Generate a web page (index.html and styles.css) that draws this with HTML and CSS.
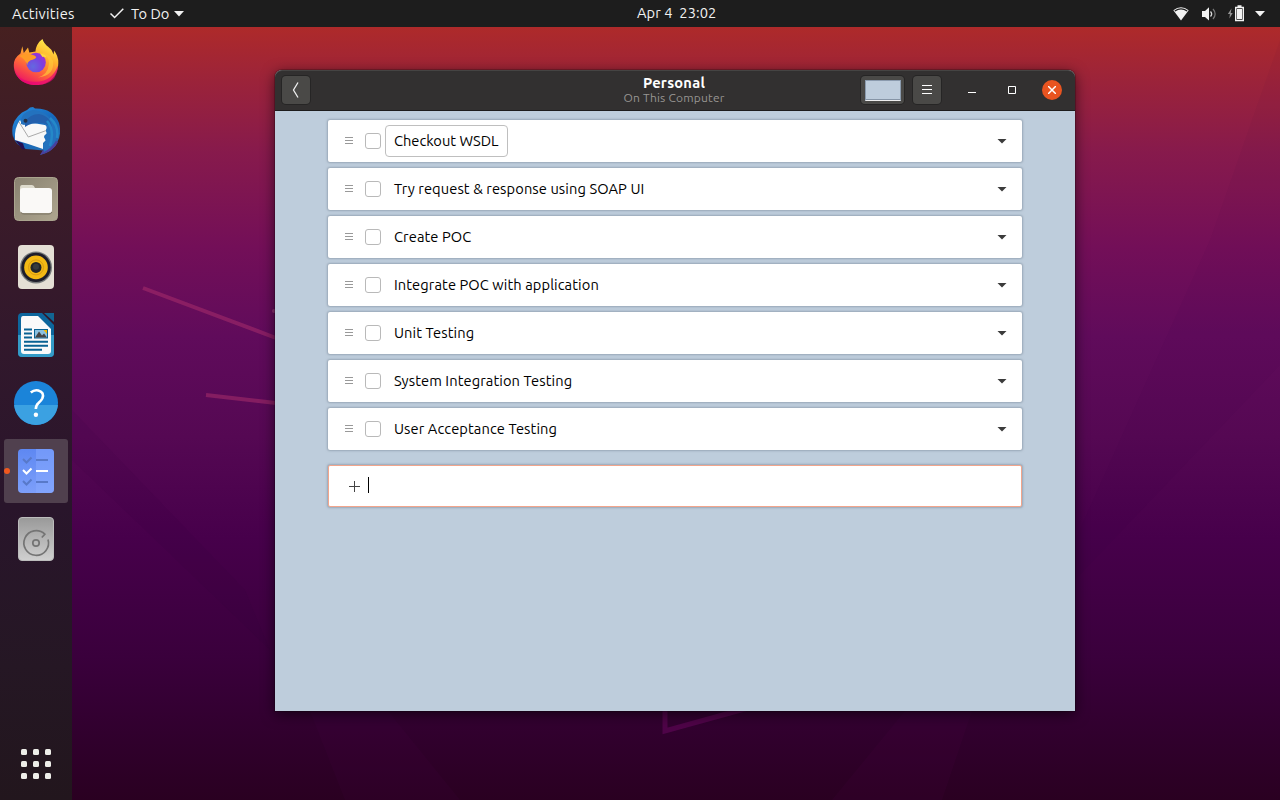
FILE: index.html
```html
<!DOCTYPE html>
<html lang="en">
<head>
<meta charset="utf-8">
<title>To Do</title>
<link rel="stylesheet" href="styles.css">
</head>
<body>
<div class="screen">
<header class="topbar">
  <div class="topbar-left">
    <span class="activities">Activities</span>
    <svg class="app-check" width="16" height="14" viewBox="0 0 16 14"><path d="M1.500 6.500 5.600 10.500 14.300 1.800" fill="none" stroke="#f2f2f2" stroke-width="1.500"/></svg>
    <span class="app-name">To Do</span>
    <svg class="app-arrow" width="10" height="6"><path d="M0 0h10L5 5.500z" fill="#f2f2f2"/></svg>
  </div>
  <span class="clock">Apr 4&nbsp; 23:02</span>
  <div class="topbar-right">
    <svg class="wifi" width="16" height="16" viewBox="0 0 16 16"><path d="M.3 4.200Q8-1.500 15.700 4.200L8 14.500z" fill="#f2f2f2"/><path d="M1.800 5Q8 .7 14.200 5" fill="none" stroke="#1d1d1d" stroke-width="1.200"/></svg>
    <svg class="volume" width="16" height="16" viewBox="0 0 16 16"><path d="M1 5h3l4-3.800v13.400L4 11H1z" fill="#f2f2f2"/><path d="M9.500 5.500q2.300 2.500 0 5" fill="none" stroke="#ddd" stroke-width="1.300"/><path d="M12 3q4.300 5 0 10" fill="none" stroke="#777" stroke-width="1.200"/></svg>
    <svg class="battery" width="18" height="18" viewBox="0 0 18 18"><path d="M4.500 4.500.8 10h2.100l-.5 4.600L5.700 9H3.700z" fill="#929292"/><path d="M8.700 3.500h7.600v13H8.700zM10.500 2h4" fill="none" stroke="#f2f2f2" stroke-width="1.400"/><path d="M10 5h5v10h-5z" fill="#f2f2f2"/></svg>
    <svg width="10" height="6"><path d="M0 0h10L5 5.500z" fill="#f2f2f2"/></svg>
  </div>
</header>
<div class="desktop">
  <svg class="wallpaper" width="1208" height="773" viewBox="72 27 1208 773">
    <path d="M72 410 245 590 270 650 72 460z" fill="#20003b" opacity=".06"/>
    <path d="M1075 540 1210 240 1280 40V365L1075 580z" fill="#20003b" opacity=".03"/>
    <path d="M310 711H388L460 800H345z" fill="#51004c" opacity=".1"/>
    <path d="M905 711H972L942 800H832z" fill="#51004c" opacity=".12"/>
    <path d="M143 288 276 338M206 395l70 8" fill="none" stroke="#a82e6c" stroke-width="4" opacity=".55"/>
    <path d="M665 705v26l83-23" fill="none" stroke="#56054f" stroke-width="5" opacity=".8"/>
    <circle cx="274" cy="311" r="2" fill="#a84b83" opacity=".6"/>
  </svg>
  <nav class="dock">
    <div class="launcher"><svg width="48" height="48" viewBox="0 0 48 48">
      <defs><linearGradient id="fx" x1=".8" y1="0" x2=".3" y2="1"><stop stop-color="#fff44f"/><stop offset=".35" stop-color="#ffb52d"/><stop offset=".65" stop-color="#ff6838"/><stop offset="1" stop-color="#ec1266"/></linearGradient><radialGradient id="fp" cx=".35" cy=".7" r=".8"><stop stop-color="#6369e0"/><stop offset=".6" stop-color="#7c3fe0"/><stop offset="1" stop-color="#a52ed1"/></radialGradient></defs>
      <path d="M10.300 7.300 8.500 14.500Q1.800 19 1.800 26C1.800 38 11 46 24.200 46 37 46 46 37.500 46.300 24q.2-7-4.300-12.500l-.3 4L39.500 11C37.500 8.500 32 5.500 30.500 0 25.500 3.500 23.800 8.500 23.500 12.500L17.300 13.400 16 8.500 11.800 14z" fill="url(#fx)"/>
      <path d="M2 28Q5 42.500 22 42.700q17 1 24-16Q45 46 24.500 46 5 46 2 28" fill="#e6007a" opacity=".65"/>
      <path d="M28 13.500q9 3 9 11-1 11-11 14 17-2 15-16.500-3-8-13-8.500" fill="#ffca3b" opacity=".65"/>
      <circle cx="24" cy="23.500" r="9.800" fill="url(#fp)"/>
      <path d="M7.500 17q6-3.500 12-1.500 3.500.5 4.800 2.500-1 2.500-5.800 3.300-3.500 2.200-3.200 5-1.500-5.500-7.800-9.300" fill="#ff9b26"/>
      <path d="M28 14.500q6 .5 6.500 4-2-1-4-.5z" fill="#ffd83d"/>
    </svg></div>
    <div class="launcher"><svg width="48" height="48" viewBox="0 0 48 48">
      <defs><linearGradient id="tb" x1=".1" y1="0" x2=".9" y2="1"><stop stop-color="#268adb"/><stop offset=".5" stop-color="#1768bb"/><stop offset=".8" stop-color="#226fb5"/><stop offset="1" stop-color="#5a2d9d"/></linearGradient></defs>
      <path d="M1 30Q-2.500 15 10 5.500L15 3l3-2.500 3-.5 2 1.500Q41 1 47 16q3 11-2 20-4.500 9-17 12l4-4.500L14 42Q3 38 1 29" fill="url(#tb)"/>
      <path d="M3 33l7 9 3 .5-2-6z" fill="#241052"/>
      <path d="M31 43q9-2 13-9l2 1q-4 9-18 13z" fill="#49409d"/>
      <path d="M3 33Q2 21 8 13l2 4q10-2 23 1l3 1-2 4 1 3-3 3 2 4-3 3v6q-14-5-28-9" fill="#f8f8f8"/>
      <path d="m7 15 9.300 15 18-6.500" fill="none" stroke="#aaa" stroke-width="1"/>
      <path d="M12 18q10-4 20-1 4 2 2 7l1 3-3 3 2 4-3 4 1 7q15-8 12-22Q38 4 21 3 8 5 9 17z" fill="#2372be"/>
      <path d="M13 15q5-8 14-8 12 2 13 14-3-4-10-5-9-1-17 4z" fill="#2360ad"/>
      <path d="M35 14q8 9 3 25M38 11q9 8 7 20" fill="none" stroke="#2588c8" stroke-width="2.500"/>
      <circle cx="13.500" cy="13.800" r="2" fill="#253146"/>
    </svg></div>
    <div class="launcher"><svg width="48" height="48" viewBox="0 0 48 48">
      <defs><linearGradient id="fi" x2="1" y2="1"><stop stop-color="#888170"/><stop offset="1" stop-color="#aea68f"/></linearGradient></defs>
      <rect x="2.500" y="2.500" width="43" height="43" rx="4" fill="url(#fi)" stroke="#aaa48e"/><path d="M8 13q0-3 2-3h10q2 0 3 3l2 2v9H8z" fill="#dedbcd"/><rect x="8" y="13" width="32" height="25" rx="3" fill="#faf9f7"/><path d="M9 37.500q1 1.500 3 1.500h25q2 0 3-2" fill="none" stroke="#7b7464"/>
    </svg></div>
    <div class="launcher"><svg width="48" height="48" viewBox="0 0 48 48">
      <rect x="6" y="2" width="36" height="44" rx="4" fill="#e4dfd5"/><circle cx="24" cy="24.400" r="16" fill="#777b7c"/><circle cx="24" cy="24.400" r="14.700" fill="#1d1d2a"/><circle cx="24" cy="24.400" r="11.800" fill="#f3b914"/><circle cx="24" cy="24.400" r="7.500" fill="none" stroke="#d99a12"/><circle cx="24" cy="24.400" r="5.500" fill="#22252a"/><circle cx="24" cy="23.700" r="3" fill="#363b3e"/>
    </svg></div>
    <div class="launcher"><svg width="48" height="48" viewBox="0 0 48 48">
      <path d="M10 2h20l12 12v28q0 4-4 4H10q-4 0-4-4V6q0-4 4-4" fill="#0d669d"/><path d="M6 24h36v18q0 4-4 4H10q-4 0-4-4z" fill="#349bc7"/><path d="M11 5h15l13 13v22q0 3-3 3H12q-3 0-3-3V8q0-3 2-3" fill="#fafafa"/><path d="M32 2h10v9z" fill="#126592"/>
      <path d="M12 18.500h8M12 22.500h8M12 26.500h8M12 30.700h24M12 34.700h24M12 38.700h18" stroke="#096293" stroke-width="2"/><rect x="22.500" y="18.500" width="13" height="8.500" fill="#8bc1e0" stroke="#096293"/><path d="m23 26.500 4-6 3 4 2-2 3 4z" fill="#444"/><path d="M31.500 19h3.500v4z" fill="#f4b800"/>
    </svg></div>
    <div class="launcher help"><svg width="48" height="48" viewBox="0 0 48 48"><circle cx="24" cy="24" r="22" fill="#1b84d9"/><path d="M2.100 26h43.800a22 22 0 0 1-43.800 0" fill="#3ba1e2"/><path d="M18.800 13.500q3.500-3 7.500-2 6.500 1.700 4 8-1 2-3.800 4.500-2.500 2-2.700 6" fill="none" stroke="#fff" stroke-width="2.600"/><circle cx="23.900" cy="35.700" r="2.200" fill="#fff"/></svg></div>
    <div class="launcher active"><i class="running"></i><svg width="48" height="48" viewBox="0 0 48 48">
      <defs><linearGradient id="td" x2="0" y2="1"><stop stop-color="#5e88f2"/><stop offset="1" stop-color="#7d9ffa"/></linearGradient></defs>
      <rect x="6" y="2" width="36" height="44" rx="4" fill="url(#td)"/><path d="M24 2h14q4 0 4 4v36q0 4-4 4H24z" fill="#87a9ff" opacity=".5"/><g fill="none" stroke-width="2"><path d="m11 12 3.500 3.500 5-5M24 13h12M11 34l3.500 3.500 5-5M24 35h12" stroke="#5879c9"/><path d="m11 23 3.500 3.500 5-5M24 24h12" stroke="#fff"/></g>
    </svg></div>
    <div class="launcher"><svg width="48" height="48" viewBox="0 0 48 48"><defs><linearGradient id="di" x2="0" y2="1"><stop stop-color="#999"/><stop offset="1" stop-color="#d0d0d0"/></linearGradient></defs><rect x="6.500" y="2.500" width="35" height="43" rx="3.500" fill="url(#di)" stroke="#bcbcbc"/><circle cx="24" cy="28" r="3.200" fill="none" stroke="#747474" stroke-width="1.700"/><path d="M36 24.500A12.300 12.300 0 1 1 32.800 19.200L29.800 22.500" fill="none" stroke="#747474" stroke-width="1.700"/></svg></div>
    <div class="app-grid"><i></i><i></i><i></i><i></i><i></i><i></i><i></i><i></i><i></i></div>
  </nav>
  <main class="window">
    <header class="headerbar">
      <button class="button back"><svg width="28" height="28"><path d="m16 6.500-4.500 7.500 4.500 7.500" fill="none" stroke="#f0f0f0" stroke-width="1.300"/></svg></button>
      <div class="heading"><span class="title">Personal</span><span class="subtitle">On This Computer</span></div>
      <div class="controls">
        <button class="button color"><i></i></button>
        <button class="button menu"><svg width="10" height="10"><path d="M0 .5h10M0 4.500h10M0 8.500h10" stroke="#fff"/></svg></button>
        <button class="control minimize"><svg width="8" height="1"><path d="M0 .5h8" stroke="#fff"/></svg></button>
        <button class="control maximize"><svg width="8" height="8"><path d="M.5.5h7v7h-7z" fill="none" stroke="#fff"/></svg></button>
        <button class="control close"><svg width="8" height="8"><path d="m0 0 8 8M8 0 0 8" stroke="#fff" stroke-width="1.500"/></svg></button>
      </div>
    </header>
    <section class="tasks">
      <div class="task"><span class="grip"></span><i class="checkbox"></i><span class="task-name focused">Checkout WSDL</span><i class="expand"></i></div>
      <div class="task"><span class="grip"></span><i class="checkbox"></i><span class="task-name">Try request &amp; response using SOAP UI</span><i class="expand"></i></div>
      <div class="task"><span class="grip"></span><i class="checkbox"></i><span class="task-name">Create POC</span><i class="expand"></i></div>
      <div class="task"><span class="grip"></span><i class="checkbox"></i><span class="task-name">Integrate POC with application</span><i class="expand"></i></div>
      <div class="task"><span class="grip"></span><i class="checkbox"></i><span class="task-name">Unit Testing</span><i class="expand"></i></div>
      <div class="task"><span class="grip"></span><i class="checkbox"></i><span class="task-name">System Integration Testing</span><i class="expand"></i></div>
      <div class="task"><span class="grip"></span><i class="checkbox"></i><span class="task-name">User Acceptance Testing</span><i class="expand"></i></div>
      <div class="new-task"><svg width="11" height="11"><path d="M0 5.500h11M5.500 0v11" stroke="#444"/></svg><i class="caret"></i></div>
    </section>
  </main>
</div>
</div>
</body>
</html>
```
FILE: styles.css
```css
* { box-sizing: border-box; }
body { margin: 0; overflow: hidden; font: 14.667px/20px Ubuntu, "Noto Sans", sans-serif; }
svg { display: block; flex-shrink: 0; }
button { border: 0; padding: 0; font: inherit; }
.screen { width: 1280px; height: 800px; display: flex; flex-direction: column; }
.topbar { height: 27px; background: #1d1d1d; color: #f2f2f2; display: grid; grid-template-columns: 637px auto 1fr; align-items: center; }
.topbar-left, .topbar-right { display: flex; align-items: center; }
.topbar-left { padding-left: 12px; }
.activities { width: 97px; letter-spacing: .25px; }
.app-name { margin-left: 6px; width: 37px; white-space: nowrap; }
.app-arrow { margin-left: 6px; }
.clock { white-space: nowrap; padding-bottom: 1px; letter-spacing: .05px; }
.topbar-right { justify-content: flex-end; padding-right: 15px; }
.wifi { margin-right: 12px; }
.volume { margin-right: 10px; }
.battery { margin: 0 10px 2px 0; }
.desktop { flex: 1; position: relative; display: flex; background: linear-gradient(#ae2a2a 0, #9b233a 55px, #871a4c 125px, #730f58 220px, #600b5b 310px, #550853 410px, #47004b 510px, #3a003c 630px, #31002e 705px, #2a0021 773px); }
.wallpaper { position: absolute; left: 72px; top: 0; }
.dock { width: 72px; padding: 4px 4px 21px; display: flex; flex-direction: column; gap: 4px; background: linear-gradient(#462020, #3d1c28 130px, #32182c 310px, #29152b 480px, #251724 640px, #22161d); }
.launcher { height: 64px; display: flex; align-items: center; justify-content: center; position: relative; border-radius: 3px; }
.active { background: #50404e; }
.running { position: absolute; left: 0; top: 29px; width: 6px; height: 6px; border-radius: 3px; background: #f0581f; }
.app-grid { margin: auto auto 0; display: grid; grid-template-columns: repeat(3, 6px); grid-auto-rows: 6px; gap: 6px; }
.app-grid i { background: #eeeee9; border-radius: 1.5px; }
.window { position: absolute; left: 275px; top: 43px; width: 800px; height: 641px; border-radius: 7px 7px 0 0; display: flex; flex-direction: column; background: #becddc; box-shadow: 0 0 0 1px #0003, 0 3px 14px #0009; }
.headerbar { height: 41px; background: #323030; border-top: 1px solid #454443; border-bottom: 1px solid #1d1c1c; border-radius: 7px 7px 0 0; display: grid; grid-template-columns: 1fr 102px 1fr; align-items: center; padding: 0 13px 1px 11px; }
.button { height: 28px; border-radius: 4px; background: #4a4947; box-shadow: 0 0 0 1px #262525; display: flex; align-items: center; justify-content: center; }
.back { width: 28px; margin-left: -4px; }
.heading { display: flex; flex-direction: column; align-items: center; white-space: nowrap; padding-bottom: 2px; }
.title { font-weight: 700; line-height: 17px; color: #fff; letter-spacing: .25px; }
.subtitle { font-size: 12px; line-height: 14px; color: #979592; letter-spacing: .2px; }
.controls { display: flex; justify-content: flex-end; align-items: center; }
.color { width: 43px; margin-right: 9px; }
.color i { width: 36px; height: 21px; background: #becddc; border: 1px solid #8b9bae; border-bottom: 1px solid #eee; box-shadow: inset 0 -1px #8695a6; }
.menu { width: 28px; margin-right: 21px; }
.control { width: 20px; height: 20px; background: none; display: flex; align-items: center; justify-content: center; margin-right: 20px; }
.minimize { padding-top: 5px; }
.control.close { margin-right: 0; border-radius: 10px; background: #e95420; }
.tasks { padding: 9px 53px; display: flex; flex-direction: column; gap: 6px; }
.task, .new-task { height: 42px; background: #fff; border-radius: 2px; box-shadow: 0 0 2px 1px #8494a3a6; display: flex; align-items: center; }
.task { padding: 0 15px 0 17px; }
.grip { width: 8px; height: 7px; background: repeating-linear-gradient(#999 0 1px, #fff 1px 3px); margin: 0 12px 1px 0; }
.checkbox { width: 16px; height: 16px; border: 1px solid #b9b9b9; border-radius: 3px; }
.task-name { height: 32px; margin-left: 4px; padding: 0 8px; border: 1px solid transparent; border-radius: 4px; display: flex; align-items: center; white-space: nowrap; color: #000; letter-spacing: .09px; }
.focused { border-color: #bfbfbf; width: 123px; letter-spacing: 0; }
.expand { width: 10px; height: 5px; margin-left: auto; background: #3b3b3b; clip-path: polygon(0 0, 100% 0, 50% 100%); }
.new-task { margin-top: 9px; padding-left: 20px; border: 1px solid #f2a58c; }
.new-task svg { margin-top: 1px; }
.caret { width: 1px; height: 16px; background: #000; margin-left: 8px; margin-bottom: 2px; }
```
